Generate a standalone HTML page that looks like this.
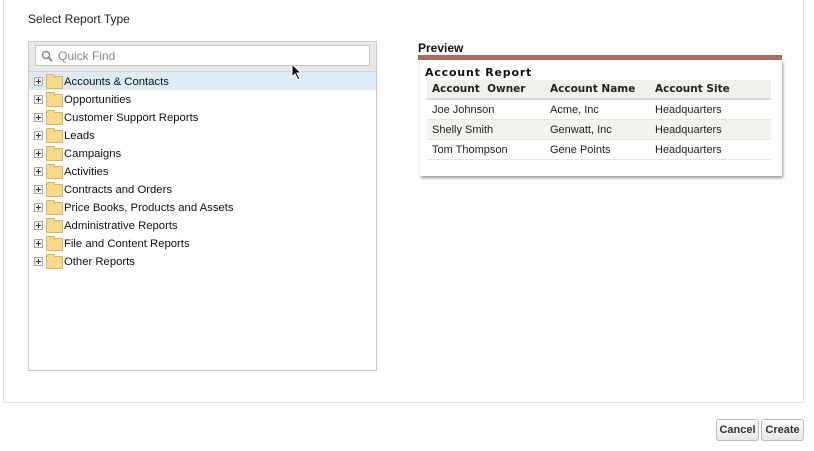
<!DOCTYPE html>
<html><head><style>
body{margin:0;width:814px;height:451px;background:#fff;font-family:"Liberation Sans",Arial,sans-serif;position:relative;overflow:hidden}
.abs{position:absolute}
.outer{left:3px;top:-1px;width:799px;height:402px;border:1px solid #e2e2e2;}
.title{left:28px;top:12px;font-size:12px;color:#222}
.tree{left:28px;top:41px;width:347px;height:328px;border:1px solid #c9c9c9;background:#fff}
.sbar{left:0;top:0;width:347px;height:29px;background:#e8e8e8;border-bottom:1px solid #d0d0d0}
.inp{left:6px;top:3px;width:333px;height:19px;background:#fff;border:1px solid #c2c2c2;font-size:12px;color:#888}
.row{position:absolute;left:0;width:347px;height:18px;font-size:11.3px;color:#111}
.row .pl{position:absolute;left:5px;top:5px;width:7px;height:7px;border:1px solid #aaa;background:#f4f4f4}
.row .pl:before{content:"";position:absolute;left:1px;top:3px;width:5px;height:1px;background:#333}
.row .pl:after{content:"";position:absolute;left:3px;top:1px;width:1px;height:5px;background:#333}
.row .fd{position:absolute;left:17px;top:4px;width:15px;height:11px;background:#f7d98a;border:1px solid #d9b45a;border-radius:1px}
.row .fd:before{content:"";position:absolute;left:-1px;top:-3px;width:7px;height:3px;background:#f7d98a;border:1px solid #d9b45a;border-bottom:none;border-radius:1px 2px 0 0}
.row span{position:absolute;left:35px;top:4px}
.prev{left:418px;top:41px;font-size:12px;font-weight:bold;color:#111}
.bar{left:418px;top:55px;width:364px;height:5px;background:#a86a5c}
.card{left:420px;top:60px;width:362px;height:116px;background:#fff;box-shadow:1px 2px 3px #999}
.ar{left:425px;top:66px;font-size:11px;font-weight:bold;letter-spacing:.8px;color:#111;font-family:"DejaVu Sans",sans-serif}
table{position:absolute;left:427px;top:80px;width:344px;border-collapse:collapse;font-size:11px;color:#222;table-layout:fixed}
td{height:19px;padding:0 0 0 5px;border-bottom:1px solid #e6e6dc}
th{height:18px;text-align:left;padding:0 0 0 5px;font-family:"DejaVu Sans",sans-serif;font-size:10.5px;background:#f1f0ea;border-bottom:2px solid #d8d8d0;white-space:nowrap}
tr.g td{background:#f3f2ec}
.btn{top:419px;height:20px;border:1px solid #bbb;border-radius:3px;background:linear-gradient(#fff,#e6e6e6);font-size:11px;font-weight:bold;color:#333;text-align:center;line-height:20px}
</style></head><body>
<div class="abs outer"></div>
<div class="abs title">Select Report Type</div>
<div class="abs tree">
 <div class="abs sbar"><div class="abs inp">
  <svg class="abs" style="left:5px;top:4px" width="12" height="12" viewBox="0 0 12 12"><circle cx="5" cy="5" r="3.5" fill="none" stroke="#888" stroke-width="1.5"/><path d="M7.5 7.5L11 11" stroke="#888" stroke-width="2"/></svg>
  <span class="abs" style="left:22px;top:3px">Quick Find</span></div></div>
 <div class="row" style="top:30px;background:#dcebf6"><i class="pl"></i><i class="fd"></i><span>Accounts &amp; Contacts</span></div>
 <div class="row" style="top:48px"><i class="pl"></i><i class="fd"></i><span>Opportunities</span></div>
 <div class="row" style="top:66px"><i class="pl"></i><i class="fd"></i><span>Customer Support Reports</span></div>
 <div class="row" style="top:84px"><i class="pl"></i><i class="fd"></i><span>Leads</span></div>
 <div class="row" style="top:102px"><i class="pl"></i><i class="fd"></i><span>Campaigns</span></div>
 <div class="row" style="top:120px"><i class="pl"></i><i class="fd"></i><span>Activities</span></div>
 <div class="row" style="top:138px"><i class="pl"></i><i class="fd"></i><span>Contracts and Orders</span></div>
 <div class="row" style="top:156px"><i class="pl"></i><i class="fd"></i><span>Price Books, Products and Assets</span></div>
 <div class="row" style="top:174px"><i class="pl"></i><i class="fd"></i><span>Administrative Reports</span></div>
 <div class="row" style="top:192px"><i class="pl"></i><i class="fd"></i><span>File and Content Reports</span></div>
 <div class="row" style="top:210px"><i class="pl"></i><i class="fd"></i><span>Other Reports</span></div>
</div>
<svg class="abs" style="left:291px;top:63px" width="12" height="18" viewBox="0 0 12 18"><path d="M1 1L1 14L4 11L7 17L9 16L6 10L10 10Z" fill="#111" stroke="#fff" stroke-width="1"/></svg>
<div class="abs prev">Preview</div>
<div class="abs bar"></div>
<div class="abs card"></div>
<div class="abs ar">Account Report</div>
<table>
<colgroup><col style="width:118px"><col style="width:105px"><col></colgroup>
<tr><th>Account&nbsp; Owner</th><th>Account Name</th><th>Account Site</th></tr>
<tr><td>Joe Johnson</td><td>Acme, Inc</td><td>Headquarters</td></tr>
<tr class="g"><td>Shelly Smith</td><td>Genwatt, Inc</td><td>Headquarters</td></tr>
<tr><td>Tom Thompson</td><td>Gene Points</td><td>Headquarters</td></tr>
</table>
<div class="abs btn" style="left:716px;width:41px">Cancel</div>
<div class="abs btn" style="left:761px;width:41px">Create</div>
</body></html>
